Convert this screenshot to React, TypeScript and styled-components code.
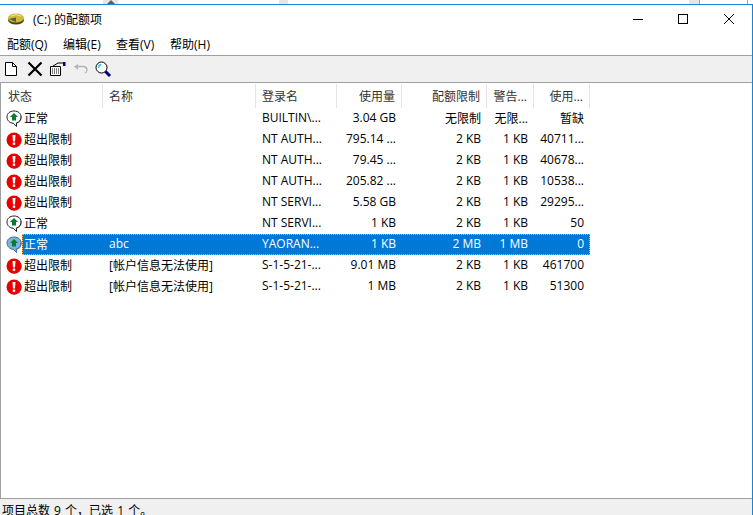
import React from "react"
import styled, { createGlobalStyle } from "styled-components"

const font = `"Open Sans", "Noto Sans CJK SC", sans-serif`

const GlobalStyle = createGlobalStyle`
    html, body {
        margin: 0;
        padding: 0;
        height: 100%;
        overflow: hidden;
        background: white;
    }
    #root {
        height: 100%;
    }
`

const Page = styled.div`
    height: 515px;
    width: 753px;
    display: flex;
    flex-direction: column;
    overflow: hidden;
    font-family: ${font};
    font-size: 12px;
    color: #000;
`

const BehindStrip = styled.div`
    height: 4px;
    flex: none;
    display: flex;
    background: #fff;
`

const BehindPiece = styled.div<{ $left: number; $width: number; $dark?: boolean }>`
    width: ${(p) => p.$width}px;
    margin-left: ${(p) => p.$left}px;
    background: ${(p) => (p.$dark ? "#a8a8a8" : "#e6e6e6")};
    display: flex;
    justify-content: center;
    align-items: flex-end;
`

const ScrollArrow = styled.div`
    width: 0;
    height: 0;
    border-left: 4px solid transparent;
    border-right: 4px solid transparent;
    border-bottom: 4px solid #606060;
`

const Win = styled.div`
    flex: 1;
    min-height: 0;
    display: flex;
    flex-direction: column;
    border-top: 1px solid #1883d7;
    border-right: 1px solid #1883d7;
`

const TitleBar = styled.div`
    height: 28px;
    padding: 0 0 2px 8px;
    flex: none;
    display: flex;
    align-items: center;
`

const TitleText = styled.span`
    margin-left: 9px;
    flex: 1;
`

const WinButtons = styled.div`
    display: flex;
    align-items: center;
    padding-right: 18px;
`

const WinButton = styled.span<{ $gap: number }>`
    display: flex;
    margin-left: ${(p) => p.$gap}px;
`

const MenuBar = styled.div`
    height: 18px;
    padding: 0 0 2px 7px;
    flex: none;
    display: flex;
    align-items: center;
    border-bottom: 1px solid #a0a0a0;
`

const MenuItem = styled.span<{ $width: number }>`
    width: ${(p) => p.$width}px;
`

const ToolBar = styled.div`
    height: 26px;
    flex: none;
    display: flex;
    align-items: center;
    background: #f0f0f0;
    border-bottom: 1px solid #a0a0a0;
`

const ToolButton = styled.span`
    width: 23px;
    display: flex;
    justify-content: center;
`

const List = styled.div`
    flex: 1;
    min-height: 0;
    padding-top: 1px;
    background: #fff;
    border-left: 1px solid #a0a0a0;
    border-bottom: 1px solid #a0a0a0;
`

const columns = "102px 153px 81px 65px 85px 47px 56px"

const HeadRow = styled.div`
    display: grid;
    grid-template-columns: ${columns};
    height: 24px;
`

const HeadCell = styled.div<{ $right?: boolean }>`
    display: flex;
    align-items: center;
    justify-content: ${(p) => (p.$right ? "flex-end" : "flex-start")};
    padding: 0 ${(p) => (p.$right ? 6 : 5)}px 0 6px;
    border-right: 1px solid #e5e5e5;
    color: #333;
    white-space: nowrap;
    overflow: hidden;
`

const FirstHeadCell = styled(HeadCell)`
    padding-left: 7px;
`

const Row = styled.div<{ $selected?: boolean }>`
    display: grid;
    grid-template-columns: ${columns};
    width: 589px;
    height: 21px;
    position: relative;
    color: ${(p) => (p.$selected ? "#fff" : "#000")};
`

const FocusRect = styled.div`
    position: absolute;
    top: 0;
    right: 0;
    bottom: 0;
    left: 21px;
    border: 1px dotted #f2b463;
    pointer-events: none;
`

const Cell = styled.div<{ $right?: boolean; $selected?: boolean }>`
    display: flex;
    align-items: center;
    justify-content: ${(p) => (p.$right ? "flex-end" : "flex-start")};
    padding: 0 6px 2px 6px;
    white-space: nowrap;
    overflow: hidden;
    background: ${(p) => (p.$selected ? "#0078d7" : "transparent")};
`

const StatusCell = styled.div`
    display: flex;
    align-items: center;
    padding-left: 5px;
    white-space: nowrap;
`

const StatusText = styled.span<{ $selected?: boolean }>`
    display: flex;
    align-items: center;
    align-self: stretch;
    flex: 1;
    padding: 0 0 2px 2px;
    background: ${(p) => (p.$selected ? "#0078d7" : "transparent")};
`

const StatusBar = styled.div`
    height: 16px;
    flex: none;
    background: #f0f0f0;
    padding-left: 2px;
    line-height: 23px;
    word-spacing: 1px;
    white-space: nowrap;
`

const DriveIcon = () => (
    <svg width="16" height="12" viewBox="0 0 16 12">
        <ellipse cx="8" cy="7" rx="8" ry="4.5" fill="#4f4508" />
        <ellipse cx="8" cy="5" rx="8" ry="4.5" fill="#cdbb3c" />
        <path d="M1 6 L8 4.5 L8 9 Z" fill="#555" />
        <path d="M3 3 Q8 0.5 13 3" stroke="#f0e88c" fill="none" />
    </svg>
)

const MinIcon = () => (
    <svg width="10" height="10" viewBox="0 0 10 10">
        <path d="M0 5.5 H10" stroke="#000" />
    </svg>
)

const MaxIcon = () => (
    <svg width="10" height="10" viewBox="0 0 10 10">
        <rect x="0.5" y="0.5" width="9" height="9" fill="none" stroke="#000" />
    </svg>
)

const CloseIcon = () => (
    <svg width="10" height="10" viewBox="0 0 10 10">
        <path d="M0 0 L10 10 M10 0 L0 10" stroke="#000" />
    </svg>
)

const NewIcon = () => (
    <svg width="16" height="16" viewBox="0 0 16 16">
        <path d="M1.5 1.5 H8.5 L12.5 5.5 V14.5 H1.5 Z M8.5 1.5 V5.5 H12.5" fill="#fff" stroke="#000" />
    </svg>
)

const DeleteIcon = () => (
    <svg width="16" height="16" viewBox="0 0 16 16">
        <path d="M1.5 1.5 L14.5 14.5 M14.5 1.5 L1.5 14.5" stroke="#000" strokeWidth="2.2" />
    </svg>
)

const PropsIcon = () => (
    <svg width="17" height="16" viewBox="0 0 17 16">
        <path d="M1.5 5.5 H11.5 V14.5 H1.5 Z" fill="#fff" stroke="#000" />
        <path d="M4 5 L9 2 H14" fill="none" stroke="#000" />
        <path d="M3 8 H10 M3 10 H10 M3 12 H10" stroke="#000" strokeDasharray="1 1" />
        <rect x="14" y="1" width="2.5" height="4" fill="#000080" />
    </svg>
)

const UndoIcon = () => (
    <svg width="16" height="16" viewBox="0 0 16 16">
        <path d="M1 5.5 L5 3 V9 Z" fill="#b5b5b5" />
        <path d="M5 5.5 H11 Q14 6 14 9 Q14 11 12 12" fill="none" stroke="#b5b5b5" strokeWidth="1.3" />
    </svg>
)

const FindIcon = () => (
    <svg width="17" height="17" viewBox="0 0 17 17">
        <path d="M10 10 L15 15" stroke="#000080" strokeWidth="3" />
        <circle cx="6.5" cy="6.5" r="5.5" fill="#fff" stroke="#000" />
        <path d="M3.5 7 Q3.5 4 6 3.5" stroke="#22c5d8" strokeWidth="1.3" fill="none" />
    </svg>
)

const OkIcon: React.FC<{ selected?: boolean }> = ({ selected }) => (
    <svg width="16" height="18" viewBox="0 0 16 18">
        <ellipse cx="8.8" cy="7.8" rx="7" ry="6.2" fill="#9a9a9a" />
        <path
            d="M8 1 C3.6 1 1 3.6 1 7 C1 10.4 3.6 13 7.2 13.2 L10.6 16.5 L10.4 12.9 C13.2 12.2 15 10 15 7 C15 3.6 12.4 1 8 1 Z"
            fill={selected ? "#7fb2dc" : "#fff"}
            stroke={selected ? "#3f6f9c" : "#222"}
        />
        <path d="M8 3 L12 7 H10 V10.6 H6 V7 H4 Z" fill="#0a7d2c" />
    </svg>
)

const OverIcon = () => (
    <svg width="16" height="16" viewBox="0 0 16 16">
        <circle cx="8.4" cy="8.6" r="7.4" fill="#888" />
        <circle cx="8" cy="8" r="7.5" fill="#e80000" />
        <path d="M6.5 3 H9.5 L9 9.5 H7 Z" fill="#fff" />
        <rect x="6.8" y="10.5" width="2.4" height="2.4" fill="#fff" />
    </svg>
)

interface IQuota {
    over: boolean
    name: string
    login: string
    used: string
    limit: string
    warn: string
    percent: string
    selected?: boolean
}

const quotas: IQuota[] = [
    { over: false, name: "", login: "BUILTIN\\...", used: "3.04 GB", limit: "无限制", warn: "无限...", percent: "暂缺" },
    { over: true, name: "", login: "NT AUTH...", used: "795.14 ...", limit: "2 KB", warn: "1 KB", percent: "40711..." },
    { over: true, name: "", login: "NT AUTH...", used: "79.45 ...", limit: "2 KB", warn: "1 KB", percent: "40678..." },
    { over: true, name: "", login: "NT AUTH...", used: "205.82 ...", limit: "2 KB", warn: "1 KB", percent: "10538..." },
    { over: true, name: "", login: "NT SERVI...", used: "5.58 GB", limit: "2 KB", warn: "1 KB", percent: "29295..." },
    { over: false, name: "", login: "NT SERVI...", used: "1 KB", limit: "2 KB", warn: "1 KB", percent: "50" },
    { over: false, name: "abc", login: "YAORAN...", used: "1 KB", limit: "2 MB", warn: "1 MB", percent: "0", selected: true },
    { over: true, name: "[帐户信息无法使用]", login: "S-1-5-21-...", used: "9.01 MB", limit: "2 KB", warn: "1 KB", percent: "461700" },
    { over: true, name: "[帐户信息无法使用]", login: "S-1-5-21-...", used: "1 MB", limit: "2 KB", warn: "1 KB", percent: "51300" },
]

const App: React.FC = () => {
    return (
        <Page>
            <GlobalStyle />
            <BehindStrip>
                <BehindPiece $left={103} $width={15}>
                    <ScrollArrow />
                </BehindPiece>
                <BehindPiece $left={161} $width={9} />
                <BehindPiece $left={401} $width={10} />
                <BehindPiece $left={0} $width={1} $dark />
                <BehindPiece $left={47} $width={1} $dark />
            </BehindStrip>
            <Win>
                <TitleBar>
                    <DriveIcon />
                    <TitleText>(C:) 的配额项</TitleText>
                    <WinButtons>
                        <WinButton $gap={0}><MinIcon /></WinButton>
                        <WinButton $gap={35}><MaxIcon /></WinButton>
                        <WinButton $gap={36}><CloseIcon /></WinButton>
                    </WinButtons>
                </TitleBar>
                <MenuBar>
                    <MenuItem $width={56}>配额(Q)</MenuItem>
                    <MenuItem $width={53}>编辑(E)</MenuItem>
                    <MenuItem $width={54}>查看(V)</MenuItem>
                    <MenuItem $width={60}>帮助(H)</MenuItem>
                </MenuBar>
                <ToolBar>
                    <ToolButton><NewIcon /></ToolButton>
                    <ToolButton><DeleteIcon /></ToolButton>
                    <ToolButton><PropsIcon /></ToolButton>
                    <ToolButton><UndoIcon /></ToolButton>
                    <ToolButton><FindIcon /></ToolButton>
                </ToolBar>
                <List>
                    <HeadRow>
                        <FirstHeadCell>状态</FirstHeadCell>
                        <HeadCell>名称</HeadCell>
                        <HeadCell>登录名</HeadCell>
                        <HeadCell $right>使用量</HeadCell>
                        <HeadCell $right>配额限制</HeadCell>
                        <HeadCell $right>警告...</HeadCell>
                        <HeadCell $right>使用...</HeadCell>
                    </HeadRow>
                    {quotas.map((q, i) => (
                        <Row key={i} $selected={q.selected}>
                            <StatusCell>
                                {q.over ? <OverIcon /> : <OkIcon selected={q.selected} />}
                                <StatusText $selected={q.selected}>
                                    {q.over ? "超出限制" : "正常"}
                                </StatusText>
                            </StatusCell>
                            <Cell $selected={q.selected}>{q.name}</Cell>
                            <Cell $selected={q.selected}>{q.login}</Cell>
                            <Cell $right $selected={q.selected}>{q.used}</Cell>
                            <Cell $right $selected={q.selected}>{q.limit}</Cell>
                            <Cell $right $selected={q.selected}>{q.warn}</Cell>
                            <Cell $right $selected={q.selected}>{q.percent}</Cell>
                            {q.selected && <FocusRect />}
                        </Row>
                    ))}
                </List>
                <StatusBar>项目总数 9 个，已选 1 个。</StatusBar>
            </Win>
        </Page>
    )
}

export default App
